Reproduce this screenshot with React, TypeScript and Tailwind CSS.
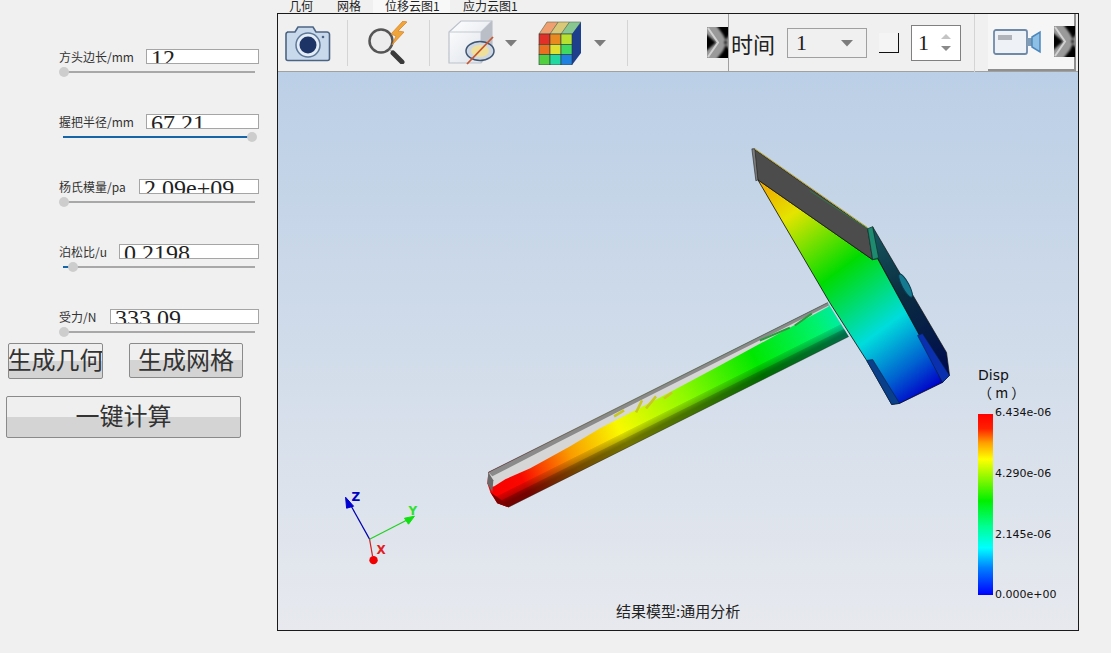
const cjk = "font-['Noto_Sans_CJK_SC','Liberation_Sans',sans-serif]";

const params = [
  { label: '方头边长/mm', value: '12', inputW: 'w-[113px]', thumb: 1, fill: 0 },
  { label: '握把半径/mm', value: '67.21', inputW: 'w-[113px]', thumb: 189, fill: 189 },
  { label: '杨氏模量/pa', value: '2.09e+09', inputW: 'w-[120px]', thumb: 1, fill: 0 },
  { label: '泊松比/u', value: '0.2198', inputW: 'w-[140px]', thumb: 10, fill: 10 },
  { label: '受力/N', value: '333.09', inputW: 'w-[149px]', thumb: 1, fill: 0 },
];

const ParamRow = ({ p }: { p: (typeof params)[number] }) => (
  <div className="h-[65px] w-[200px] ml-[59px] shrink-0">
    <div className="flex items-center justify-between h-[15px]">
      <span className={`text-[12px] leading-none text-[#333] whitespace-nowrap ${cjk}`}>{p.label}</span>
      <div className={`${p.inputW} h-[15px] border border-[#a5a5a5] bg-white overflow-hidden pl-[4px] font-['Liberation_Serif',serif] text-[24px] leading-[17px] text-[#222] whitespace-nowrap`}>
        {p.value}
      </div>
    </div>
    <div className="relative h-[2px] w-[192px] ml-[4px] mt-[7px] bg-[#a8a8a8]">
      <div className="absolute left-0 top-0 h-[2px] bg-[#1565a8]" style={{ width: p.fill }} />
      <div className="absolute top-[-4px] w-[10px] h-[10px] rounded-full bg-[#cdcdcd]" style={{ left: p.thumb - 5 }} />
    </div>
  </div>
);

const btn = `border border-[#8a8a8a] rounded-[2px] bg-[linear-gradient(#efefef_0%,#efefef_50%,#d4d4d4_50%,#d4d4d4_100%)] text-[24px] leading-none text-[#333] flex items-center justify-center whitespace-nowrap overflow-hidden pb-[4px] ${cjk}`;

const Sep = ({ className }: { className: string }) => <div className={`w-px bg-[#d4d4d4] shrink-0 ${className}`} />;

const Caret = ({ className }: { className: string }) => (
  <svg width="14" height="8" viewBox="0 0 14 8" className={`shrink-0 ${className}`}>
    <path d="M1 1h12L7 7.500z" fill="#7c7c7c" />
  </svg>
);

const More = ({ className }: { className: string }) => (
  <svg width="21" height="31" viewBox="0 0 21 31" className={`shrink-0 ${className}`}>
    <defs>
      <filter id="moreblur" x="-20%" y="-20%" width="140%" height="140%">
        <feGaussianBlur stdDeviation="1.200" />
      </filter>
    </defs>
    <rect width="21" height="31" fill="#9a9a9a" />
    <g filter="url(#moreblur)" fill="#000">
      <path d="M-2 6l11 9.500L-2 25z" />
      <path d="M9 -2h14v9l-6 8.500 6 8V33H9l7-9 4-8.500-4-8z" />
    </g>
    <path d="M1 1l10 14.500L1 30" stroke="#e8e8e8" strokeWidth="2" fill="none" opacity="0.7" />
  </svg>
);

const CameraIcon = () => (
  <svg width="46" height="38" viewBox="0 0 46 38" className="shrink-0">
    <path d="M2 8h8l3-5h15l3 5h11a2.500 2.500 0 0 1 2.500 2.500v24a2 2 0 0 1-2 2H3a2 2 0 0 1-2-2v-24A2.500 2.500 0 0 1 3 8z" fill="#c9d9ec" stroke="#4c6484" strokeWidth="1.600" />
    <circle cx="23" cy="21" r="12" fill="#e4ecf5" stroke="#5d7898" strokeWidth="1.500" />
    <circle cx="23" cy="21" r="8.500" fill="#1d3566" />
    <circle cx="38" cy="13" r="1.300" fill="#4c6484" />
  </svg>
);

const SearchIcon = () => (
  <svg width="46" height="43" viewBox="0 0 46 43" className="shrink-0">
    <circle cx="14" cy="20" r="11.500" fill="#ececec" stroke="#555" strokeWidth="2.500" />
    <path d="M23 29l3 1 2 3-3-1z" fill="#777" />
    <path d="M26 32l9 9" stroke="#3a3a3a" strokeWidth="5" strokeLinecap="round" />
    <path d="M36 0L24 13l5 2-4 9 12-13-6-1 9-9z" fill="#f0a53a" stroke="#d8862a" strokeWidth="0.800" />
  </svg>
);

const BoxIcon = () => (
  <svg width="50" height="45" viewBox="0 0 50 45" className="shrink-0">
    <defs>
      <linearGradient id="boxf" x1="0" y1="0" x2="1" y2="1">
        <stop offset="0" stopColor="#ffffff" />
        <stop offset="1" stopColor="#dbe0e8" />
      </linearGradient>
    </defs>
    <path d="M1 12L13 1h31v30L33 43H1z" fill="url(#boxf)" stroke="#bcc2cc" strokeWidth="1.200" />
    <path d="M1 12h32v31M33 12L44 1" fill="none" stroke="#c4c9d2" strokeWidth="1.200" />
    <path d="M33 12L44 1v30L33 43z" fill="#b9bec7" />
    <ellipse cx="32" cy="31" rx="14" ry="9.500" fill="#cfd7e3" stroke="#3e5673" strokeWidth="1.500" />
    <ellipse cx="32" cy="31" rx="9" ry="6" fill="#efe09c" />
    <path d="M45 17L19 44" stroke="#c8552e" strokeWidth="1.800" />
  </svg>
);

const CubeIcon = () => {
  const cols = [
    ['#e03028', '#e88a20', '#b8e030'],
    ['#e87020', '#e0e030', '#40d860'],
    ['#50d040', '#20d8a0', '#2080e0'],
  ];
  const tops = ['#f0a070', '#d8c878', '#88c890'];
  return (
    <svg width="44" height="44" viewBox="0 0 44 44" className="shrink-0">
      <path d="M1 13L9 1h34l-9 12z" fill="#e8c890" />
      {tops.map((c, i) => (
        <path key={c} d={`M${1 + i * 11} 13L${9 + i * 11.300} 1h11.300l-8 12z`} fill={c} stroke="#5a6a50" strokeWidth="0.600" />
      ))}
      <path d="M34 13l9-12v31l-9 12z" fill="#1d3f8c" />
      {cols.map((row, r) =>
        row.map((c, i) => <rect key={`${r}-${i}`} x={1 + i * 11} y={13 + r * 10.300} width="11" height="10.300" fill={c} stroke="#2a3a3a" strokeWidth="0.600" />)
      )}
    </svg>
  );
};

const VideoIcon = () => (
  <svg width="48" height="26" viewBox="0 0 48 26" className="shrink-0">
    <rect x="1" y="1" width="33" height="24" rx="2" fill="#eef1f5" stroke="#6f8aa8" strokeWidth="1.800" />
    <rect x="5" y="6" width="14" height="5" fill="#b0b4ba" />
    <path d="M34 9h5v8h-5z" fill="#7f9bb6" />
    <path d="M39 8l8-5v20l-8-5z" fill="#8ec0e6" stroke="#4c88bd" strokeWidth="1.500" />
  </svg>
);

const Hammer = () => (
  <svg viewBox="278 71 800 559" className="absolute inset-0 w-full h-full">
    <defs>
      <linearGradient id="len" gradientUnits="userSpaceOnUse" x1="495" y1="495" x2="845" y2="320">
        <stop offset="0" stopColor="#ff0000" />
        <stop offset="0.08" stopColor="#ff0800" />
        <stop offset="0.22" stopColor="#ffa000" />
        <stop offset="0.36" stopColor="#ffff00" />
        <stop offset="0.55" stopColor="#90ff00" />
        <stop offset="0.75" stopColor="#00ee00" />
        <stop offset="0.93" stopColor="#00f870" />
        <stop offset="1" stopColor="#00f0b0" />
      </linearGradient>
      <linearGradient id="shade" gradientUnits="userSpaceOnUse" x1="651" y1="385" x2="669" y2="421">
        <stop offset="0" stopColor="#000" stopOpacity="0.04" />
        <stop offset="0.74" stopColor="#000" stopOpacity="0.02" />
        <stop offset="0.76" stopColor="#000" stopOpacity="0.14" />
        <stop offset="0.88" stopColor="#000" stopOpacity="0.26" />
        <stop offset="0.9" stopColor="#000" stopOpacity="0.42" />
        <stop offset="1" stopColor="#000" stopOpacity="0.55" />
      </linearGradient>
      <linearGradient id="face" gradientUnits="userSpaceOnUse" x1="768" y1="186" x2="925" y2="395">
        <stop offset="0" stopColor="#efb000" />
        <stop offset="0.14" stopColor="#e4e400" />
        <stop offset="0.42" stopColor="#00dc00" />
        <stop offset="0.7" stopColor="#00dcdc" />
        <stop offset="0.88" stopColor="#0060d0" />
        <stop offset="1" stopColor="#0000c8" />
      </linearGradient>
      <linearGradient id="side" gradientUnits="userSpaceOnUse" x1="875" y1="240" x2="950" y2="375">
        <stop offset="0" stopColor="#14505a" />
        <stop offset="0.4" stopColor="#0a2c40" />
        <stop offset="1" stopColor="#000a50" />
      </linearGradient>
    </defs>

    {/* handle */}
    <path d="M488 472L828 302L849 336L508 507L497 503L490 492L487 483z" fill="url(#len)" />
    <path d="M488 472L828 302L849 336L508 507L497 503L490 492L487 483z" fill="url(#shade)" />
    <path d="M488 473L828 302L829 306L720 365L660 397L600 428L570 446L530 468L505 479L494 486L490 487z" fill="#d6d6d6" />
    <path d="M488 472L828 302L829 305L650 395L560 441L492 476z" fill="#8a8a8a" />
    <path d="M487 483L488 472L493 480L492 492z" fill="#6a6a6a" />
    <path d="M490 492L497 503L508 507L500 499z" fill="#800000" />
    <path d="M614 416L624 410M636 412L642 400M646 408L656 396M664 398L672 392" stroke="#c8c820" strokeWidth="2.500" />
    <path d="M760 340L790 327M795 325L812 313" stroke="#2a9a3c" strokeWidth="2" />
    <path d="M488 472L828 302M508 507L849 336" stroke="#222" strokeWidth="0.500" fill="none" />

    {/* head */}
    <path d="M873 226L947 352L950 375L943 382L920 335L878 258z" fill="url(#side)" stroke="#111" strokeWidth="0.700" />
    <ellipse cx="906" cy="285" rx="3.500" ry="13" transform="rotate(-28 906 285)" fill="#147a90" stroke="#0c3c50" strokeWidth="1" />
    <path d="M758 179L873 259L878 258L920 335L943 382L900 403L892 404L867 360L830 302z" fill="url(#face)" stroke="#0a0a0a" strokeWidth="0.800" />
    <path d="M867 360L873 359L900 403L892 404z" fill="#0a3f8a" stroke="#082040" strokeWidth="0.600" />
    <path d="M918 335L923 333L950 375L943 382z" fill="#0a30b0" stroke="#082040" strokeWidth="0.600" />
    <path d="M754 148L868 228L873 259L758 179z" fill="#4c4c4c" stroke="#111" strokeWidth="0.700" />
    <path d="M752 148L755 148L758 179L756 180z" fill="#7d7d7d" stroke="#222" strokeWidth="0.600" />
    <path d="M755 148L868 227" stroke="#b8a020" strokeWidth="1" />
    <path d="M810 190L868 228" stroke="#2a8040" strokeWidth="0.800" />
    <path d="M868 228L873 226L879 257L873 259z" fill="#1e8a70" stroke="#0f3a30" strokeWidth="0.800" />

    {/* triad */}
    <path d="M369 539L349 503" stroke="#0000b0" strokeWidth="1.200" />
    <path d="M345 497L353 506L346 508z" fill="#0000d0" stroke="#0000d0" />
    <path d="M369 539L408 519" stroke="#20d020" strokeWidth="1.200" />
    <path d="M414 516L404 518L408 524z" fill="#10e010" stroke="#10e010" />
    <path d="M369 539L372 556" stroke="#d02020" strokeWidth="1.200" />
    <circle cx="373" cy="560" r="4.200" fill="#f00000" />
    <text x="351" y="501" fontSize="12" fontWeight="700" fill="#0000c0" fontFamily="'DejaVu Sans',sans-serif">Z</text>
    <text x="408" y="515" fontSize="12" fontWeight="700" fill="#30e030" fontFamily="'DejaVu Sans',sans-serif">Y</text>
    <text x="376" y="554" fontSize="12" fontWeight="700" fill="#e02020" fontFamily="'DejaVu Sans',sans-serif">X</text>
  </svg>
);

export default function App() {
  return (
    <div className="w-[1111px] h-[653px] overflow-hidden bg-[#f0f0f0] flex">
      {/* left parameter column */}
      <div className="w-[277px] shrink-0 pt-[49px] flex flex-col">
        {params.map((p) => (
          <ParamRow key={p.label} p={p} />
        ))}
        <div className="flex mt-[-31px]">
          <div className={`${btn} w-[95px] h-[36px] ml-[8px]`}>生成几何</div>
          <div className={`${btn} w-[114px] h-[35px] ml-[26px]`}>生成网格</div>
        </div>
        <div className={`${btn} w-[235px] h-[42px] ml-[6px] mt-[17px]`}>一键计算</div>
      </div>

      {/* right result view */}
      <div className="flex-1 min-w-0 flex flex-col">
        <div className={`h-[13px] flex overflow-hidden text-[12px] leading-[11px] text-[#222] ${cjk}`}>
          <div className="ml-[12px] w-[48px] whitespace-nowrap">几何</div>
          <div className="w-[36px] whitespace-nowrap">网格</div>
          <div className="w-[77px] bg-[#f8f8f8] pl-[12px] whitespace-nowrap">位移云图1</div>
          <div className="ml-[13px] whitespace-nowrap">应力云图1</div>
        </div>
        <div className="w-[802px] h-[618px] border border-[#1a1a1a] flex flex-col">
          <div className="h-[58px] shrink-0 bg-[#f0f0f0] border-b border-[#a0a0a0] flex items-center">
            <div className="ml-[7px]"><CameraIcon /></div>
            <Sep className="h-[46px] ml-[16px]" />
            <div className="ml-[19px]"><SearchIcon /></div>
            <Sep className="h-[46px] ml-[16px]" />
            <div className="ml-[18px]"><BoxIcon /></div>
            <Caret className="ml-[6px]" />
            <div className="ml-[20px]"><CubeIcon /></div>
            <Caret className="ml-[11px]" />
            <Sep className="h-[46px] ml-[20px]" />
            <More className="ml-[79px]" />
            <div className="w-px h-[58px] bg-[#a0a0a0] shrink-0" />
            <div className={`ml-[2px] w-[46px] text-[22px] leading-none text-[#222] whitespace-nowrap ${cjk}`}>时间</div>
            <div className="ml-[10px] w-[80px] h-[30px] border border-[#a0a0a0] flex items-center justify-between pl-[8px] pr-[12px] font-['Liberation_Serif',serif] text-[22px] text-[#222] shrink-0">
              1<Caret className="" />
            </div>
            <div className="ml-[12px] w-[20px] h-[20px] border-r border-b border-[#111] bg-[#f4f4f4] shrink-0" />
            <div className="ml-[12px] w-[50px] h-[36px] bg-white border border-[#808080] flex items-center justify-between pl-[6px] pr-[9px] font-['Liberation_Serif',serif] text-[22px] text-[#222] shrink-0">
              1
              <div className="flex flex-col gap-[7px]">
                <svg width="10" height="5" viewBox="0 0 10 5"><path d="M0 5L5 0l5 5z" fill="#c4c4c4" /></svg>
                <svg width="10" height="5" viewBox="0 0 10 5"><path d="M0 0l5 5 5-5z" fill="#8a8a8a" /></svg>
              </div>
            </div>
            <Sep className="h-[58px] ml-[13px] bg-[#a0a0a0]" />
            <div className="ml-[13px] w-[88px] h-[57px] bg-[#f6f6f6] border-r-2 border-b-2 border-[#8f8f8f] flex items-center pl-[5px] shrink-0">
              <VideoIcon />
              <More className="ml-[13px]" />
            </div>
          </div>

          {/* 3D view */}
          <div className="relative flex-1 bg-[linear-gradient(#bbcfe6,#e7e9ee)] overflow-hidden">
            <Hammer />
            {/* legend */}
            <div className="absolute left-[700px] top-[295px] font-['DejaVu_Sans',sans-serif] text-[#111]">
              <div className="text-[14px] leading-[17px]">Disp</div>
              <div className={`text-[14px] leading-[17px] ${cjk}`}>（ m ）</div>
              <div className="relative mt-[13px] w-[15px] h-[181px] bg-[linear-gradient(#ff0000_0%,#ff2000_8%,#ffa000_16%,#ffff00_25%,#00f000_48%,#00ff90_62%,#00ffff_74%,#0080ff_85%,#0000ff_100%)]">
                <span className="absolute left-[17px] top-[-8px] text-[11px] leading-[13px] whitespace-nowrap">6.434e-06</span>
                <span className="absolute left-[17px] top-[53px] text-[11px] leading-[13px] whitespace-nowrap">4.290e-06</span>
                <span className="absolute left-[17px] top-[114px] text-[11px] leading-[13px] whitespace-nowrap">2.145e-06</span>
                <span className="absolute left-[17px] top-[174px] text-[11px] leading-[13px] whitespace-nowrap">0.000e+00</span>
              </div>
            </div>
            <div className={`absolute left-[338px] top-[530px] text-[15px] leading-[18px] text-[#222] whitespace-nowrap ${cjk}`}>结果模型:通用分析</div>
          </div>
        </div>
      </div>
    </div>
  );
}
